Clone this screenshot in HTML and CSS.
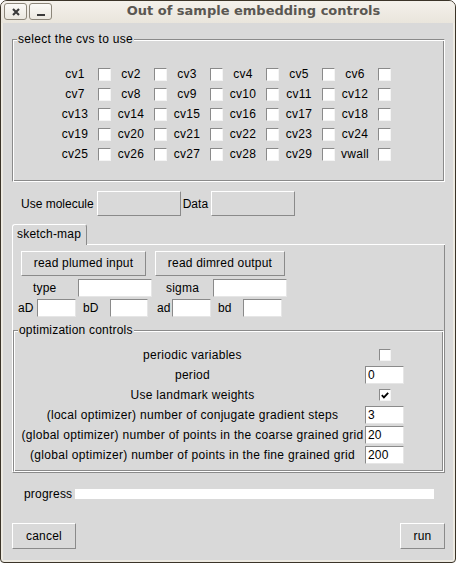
FILE: index.html
```html
<!DOCTYPE html>
<html>
<head>
<meta charset="utf-8">
<link rel="stylesheet" href="styles.css">
</head>
<body>
<div class="window">
  <div class="titlebar">
    <div class="tbtn close"><svg width="8" height="8" viewBox="0 0 8 8"><path d="M1 1L7 7M7 1L1 7" stroke="#3a3a3a" stroke-width="2.1" fill="none"/></svg></div>
    <div class="tbtn min"><span class="dash"></span></div>
    <div class="title">Out of sample embedding controls</div>
  </div>
  <div class="main">
    <fieldset class="group cvs">
      <legend>select the cvs to use</legend>
      <div class="cvgrid">
        <div class="cv"><span class="cvlabel">cv1</span><span class="check"></span></div>
        <div class="cv"><span class="cvlabel">cv2</span><span class="check"></span></div>
        <div class="cv"><span class="cvlabel">cv3</span><span class="check"></span></div>
        <div class="cv"><span class="cvlabel">cv4</span><span class="check"></span></div>
        <div class="cv"><span class="cvlabel">cv5</span><span class="check"></span></div>
        <div class="cv"><span class="cvlabel">cv6</span><span class="check"></span></div>
        <div class="cv"><span class="cvlabel">cv7</span><span class="check"></span></div>
        <div class="cv"><span class="cvlabel">cv8</span><span class="check"></span></div>
        <div class="cv"><span class="cvlabel">cv9</span><span class="check"></span></div>
        <div class="cv"><span class="cvlabel">cv10</span><span class="check"></span></div>
        <div class="cv"><span class="cvlabel">cv11</span><span class="check"></span></div>
        <div class="cv"><span class="cvlabel">cv12</span><span class="check"></span></div>
        <div class="cv"><span class="cvlabel">cv13</span><span class="check"></span></div>
        <div class="cv"><span class="cvlabel">cv14</span><span class="check"></span></div>
        <div class="cv"><span class="cvlabel">cv15</span><span class="check"></span></div>
        <div class="cv"><span class="cvlabel">cv16</span><span class="check"></span></div>
        <div class="cv"><span class="cvlabel">cv17</span><span class="check"></span></div>
        <div class="cv"><span class="cvlabel">cv18</span><span class="check"></span></div>
        <div class="cv"><span class="cvlabel">cv19</span><span class="check"></span></div>
        <div class="cv"><span class="cvlabel">cv20</span><span class="check"></span></div>
        <div class="cv"><span class="cvlabel">cv21</span><span class="check"></span></div>
        <div class="cv"><span class="cvlabel">cv22</span><span class="check"></span></div>
        <div class="cv"><span class="cvlabel">cv23</span><span class="check"></span></div>
        <div class="cv"><span class="cvlabel">cv24</span><span class="check"></span></div>
        <div class="cv"><span class="cvlabel">cv25</span><span class="check"></span></div>
        <div class="cv"><span class="cvlabel">cv26</span><span class="check"></span></div>
        <div class="cv"><span class="cvlabel">cv27</span><span class="check"></span></div>
        <div class="cv"><span class="cvlabel">cv28</span><span class="check"></span></div>
        <div class="cv"><span class="cvlabel">cv29</span><span class="check"></span></div>
        <div class="cv"><span class="cvlabel">vwall</span><span class="check"></span></div>
      </div>
    </fieldset>

    <div class="molrow">
      <span class="lbl">Use molecule</span>
      <div class="menub mol"></div>
      <span class="lbl">Data</span>
      <div class="menub data"></div>
    </div>

    <div class="tabs">
      <div class="tab">sketch-map</div>
      <div class="tabfill"></div>
    </div>
    <div class="pane">
      <div class="btnrow">
        <div class="btn b1">read plumed input</div>
        <div class="btn b2">read dimred output</div>
      </div>
      <div class="frow r1">
        <span class="fl l-type">type</span>
        <span class="field w74"></span>
        <span class="fl l-sigma">sigma</span>
        <span class="field w74"></span>
      </div>
      <div class="frow r2">
        <span class="fl l-aD">aD</span>
        <span class="field w39"></span>
        <span class="fl l-bD">bD</span>
        <span class="field w38"></span>
        <span class="fl l-ad">ad</span>
        <span class="field w39"></span>
        <span class="fl l-bd">bd</span>
        <span class="field w39"></span>
      </div>

      <fieldset class="group opt">
        <legend>optimization controls</legend>
        <div class="optgrid">
          <span class="olabel">periodic variables</span>
          <span class="check ocheck"></span>
          <span class="olabel">period</span>
          <span class="field ofield">0</span>
          <span class="olabel">Use landmark weights</span>
          <span class="check ocheck"><svg width="11" height="11" viewBox="0 0 11 11"><path d="M2 5.2L4.3 7.6L9 2.6" stroke="#000" stroke-width="2" fill="none"/></svg></span>
          <span class="olabel">(local optimizer) number of conjugate gradient steps</span>
          <span class="field ofield">3</span>
          <span class="olabel">(global optimizer) number of points in the coarse grained grid</span>
          <span class="field ofield">20</span>
          <span class="olabel">(global optimizer) number of points in the fine grained grid</span>
          <span class="field ofield">200</span>
        </div>
      </fieldset>
    </div>

    <div class="progress">
      <span class="lbl">progress</span>
      <div class="bar"></div>
    </div>

    <div class="actions">
      <div class="btn act cancel">cancel</div>
      <div class="btn act run">run</div>
    </div>
  </div>
</div>
</body>
</html>
```
FILE: styles.css
```css
* { box-sizing: border-box; }
html, body { margin: 0; padding: 0; }
body {
  width: 456px;
  height: 563px;
  overflow: hidden;
  background: #ffffff;
  font-family: "Liberation Sans", Arial, sans-serif;
  font-size: 12px;
  letter-spacing: 0.2px;
  color: #000;
}
.window {
  width: 456px;
  height: 563px;
  border: 1px solid #3b3428;
  border-radius: 7px 7px 4px 4px;
  background: #edeae2;
  display: flex;
  flex-direction: column;
  overflow: hidden;
}
.titlebar {
  height: 22px;
  flex: none;
  display: flex;
  align-items: flex-start;
  background: linear-gradient(#f4f1eb, #e9e5dc);
}
.tbtn {
  margin-top: 2px;
  width: 23px;
  height: 17px;
  border: 1px solid #8c867a;
  border-radius: 3px;
  background: linear-gradient(#fbfaf7, #ebe8e0);
  display: flex;
  align-items: center;
  justify-content: center;
}
.tbtn svg { display: block; }
.close { margin-left: 3px; }
.min { margin-left: 2px; align-items: flex-end; padding-bottom: 3px; }
.dash { width: 8px; height: 2px; background: #3a3a3a; }
.title {
  flex: 1;
  text-align: center;
  font-family: "DejaVu Sans", sans-serif;
  font-weight: bold;
  font-size: 13px;
  letter-spacing: 0;
  line-height: 20px;
  color: #5a5752;
}
.main {
  flex: 1;
  background: #d9d9d9;
  margin: 0 2px 2px;
  padding: 9px 8px 0 9px;
  display: flex;
  flex-direction: column;
}
fieldset.group {
  margin: 0;
  padding: 0;
  min-width: 0;
  border: 1px solid;
  border-color: #8a8a8a #ffffff #ffffff #8a8a8a;
  box-shadow: inset 1px 1px #ffffff, inset -1px -1px #8a8a8a;
}
fieldset.group legend {
  padding: 0 1px;
  margin-left: 4px;
  line-height: 14px;
  background: #d9d9d9;
}
.cvs legend { letter-spacing: 0.3px; }
.cvgrid {
  display: grid;
  grid-template-columns: repeat(6, 56px);
  grid-auto-rows: 20px;
  margin: 18px 0 17px 44px;
}
.cv { display: flex; align-items: center; }
.cvlabel { width: 36px; text-align: center; margin-right: 5px; letter-spacing: 0.3px; }
.check {
  width: 13px;
  height: 13px;
  background: #ffffff;
  border: 1px solid;
  border-color: #8a8a8a #f4f4f4 #f4f4f4 #8a8a8a;
  display: flex;
  align-items: center;
  justify-content: center;
}
.check svg { display: block; }
.molrow {
  display: flex;
  align-items: center;
  height: 25px;
  margin-top: 9px;
  padding-left: 9px;
  letter-spacing: 0;
}
.menub {
  width: 84px;
  height: 25px;
  border: 1px solid;
  border-color: #ffffff #8a8a8a #8a8a8a #ffffff;
}
.mol { margin: 0 2px 0 3px; }
.data { margin-left: 3px; }
.tabs {
  display: flex;
  height: 21px;
  margin-top: 8px;
}
.tab {
  width: 75px;
  border: 1px solid;
  border-color: #ffffff #8a8a8a transparent #ffffff;
  border-bottom: none;
  border-radius: 3px 3px 0 0;
  padding: 0 0 0 4px;
  line-height: 19px;
  white-space: nowrap;
}
.tabfill { flex: 1; border-bottom: 1px solid #ffffff; }
.pane {
  border-left: 1px solid #ffffff;
  border-right: 1px solid #8a8a8a;
  border-bottom: 1px solid #8a8a8a;
  padding-top: 6px;
}
.btnrow { display: flex; gap: 9px; margin-left: 8px; }
.btn {
  height: 25px;
  border: 1px solid;
  border-color: #ffffff #8a8a8a #8a8a8a #ffffff;
  background: #d9d9d9;
  line-height: 23px;
  text-align: center;
  white-space: nowrap;
}
.b1 { width: 125px; }
.b2 { width: 130px; }
.frow { display: flex; align-items: center; height: 18px; }
.r1 { margin-top: 3px; }
.r2 { margin-top: 2px; }
.fl { display: block; white-space: nowrap; }
.l-type { width: 65px; padding-left: 20px; }
.l-sigma { width: 61px; padding-left: 14px; }
.l-aD { width: 24px; padding-left: 5px; }
.l-bD { width: 34px; padding-left: 7px; }
.l-ad { width: 24px; padding-left: 9px; }
.l-bd { width: 32px; padding-left: 7px; }
.field {
  display: block;
  height: 18px;
  background: #ffffff;
  border: 1px solid;
  border-color: #8a8a8a #e6e6e6 #e6e6e6 #8a8a8a;
  padding-left: 2px;
  line-height: 16px;
}
.w74 { width: 74px; }
.w39 { width: 39px; }
.w38 { width: 38px; }
fieldset.opt { margin-top: 6px; }
.optgrid {
  display: grid;
  grid-template-columns: 341px 39px;
  column-gap: 2px;
  grid-auto-rows: 20px;
  align-items: center;
  margin: 8px 0 6px 8px;
}
.olabel { justify-self: center; text-align: center; white-space: nowrap; letter-spacing: 0.3px; }
.ocheck { justify-self: center; width: 12px; height: 12px; }
.ofield { width: 39px; height: 18px; }
.progress {
  display: flex;
  align-items: center;
  height: 14px;
  margin: 14px 11px 0 12px;
}
.bar { flex: 1; height: 10px; margin-left: 3px; background: #ffffff; }
.actions {
  display: flex;
  justify-content: space-between;
  margin-top: 22px;
}
.act { height: 26px; line-height: 24px; }
.cancel { width: 64px; }
.run { width: 45px; }
```
